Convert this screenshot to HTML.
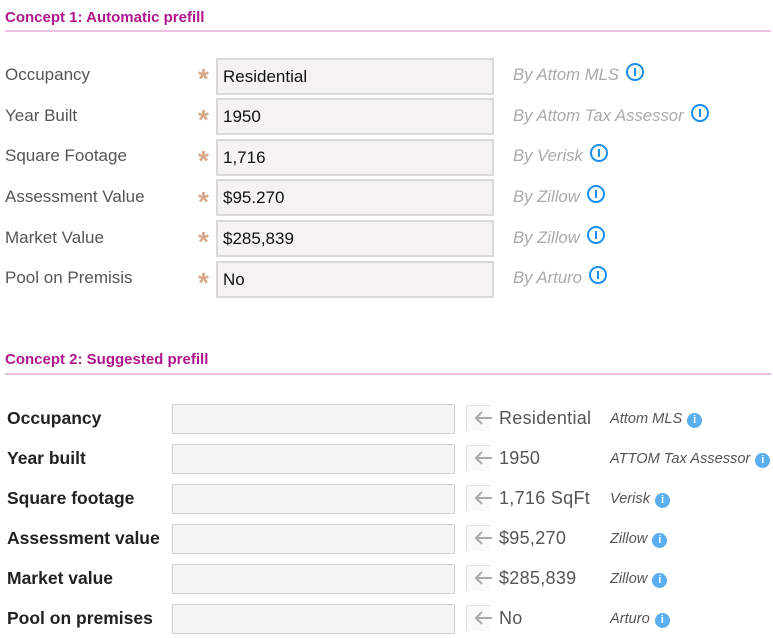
<!DOCTYPE html>
<html><head><meta charset="utf-8"><style>
*{margin:0;padding:0;box-sizing:border-box}
body{width:773px;height:638px;background:#fff;position:relative;overflow:hidden;font-family:"Liberation Sans",sans-serif}
div{white-space:nowrap}
.t{position:absolute;left:5px;font-size:15px;font-weight:bold;color:#b0168c}
.hr{position:absolute;left:5px;width:766px;height:2px;background:#ecbfe3}
.l1{position:absolute;left:5px;font-size:17px;color:#555}
.ast{position:absolute;left:198px;font-size:28px;font-weight:bold;color:#d7a888}
.in1{position:absolute;left:216px;width:278px;height:37px;background:#f4f3f2;border:2px solid #d9d9d9;font-size:17px;color:#111;padding:7px 0 0 5px}
.s1{position:absolute;left:513px;font-size:16.7px;font-style:italic;color:#aaa;margin-top:-2px}
.i1{display:inline-block;width:18px;height:18px;border:2px solid #1a8ef0;border-radius:50%;vertical-align:-1px;margin-left:7px;position:relative}
.i1:after{content:"";position:absolute;left:6px;top:3px;width:2px;height:8px;background:#1a8ef0}
.l2{position:absolute;left:7px;font-size:17.5px;color:#222;font-weight:bold}
.in2{position:absolute;left:172px;width:283px;height:30px;background:#f5f5f5;border:1px solid #ccc;border-radius:2px}
.ab{position:absolute;left:466px;width:24px;height:26px;border:1px solid #e2e2e2;border-right:none;border-bottom:none;background:#fafafa}
.ar{position:absolute;left:474px}
.v{position:absolute;left:499px;font-size:18px;color:#555;letter-spacing:0.3px}
.s2{position:absolute;left:610px;font-size:14.6px;font-style:italic;color:#555;margin-top:1px}
.i2{display:inline-block;width:15px;height:15px;border-radius:50%;background:#5aaef2;color:#fff;font-size:11px;font-style:normal;font-weight:bold;text-align:center;line-height:15px;vertical-align:0px;margin-left:5px}
</style></head><body>
<div class="t" style="top:9px">Concept 1: Automatic prefill</div>
<div class="hr" style="top:30px"></div>

<div class="l1" style="top:65px">Occupancy</div><div class="ast" style="top:63px">*</div><div class="in1" style="top:58px">Residential</div><div class="s1" style="top:65px">By Attom MLS<span class="i1"></span></div>
<div class="l1" style="top:106px">Year Built</div><div class="ast" style="top:104px">*</div><div class="in1" style="top:98px">1950</div><div class="s1" style="top:106px">By Attom Tax Assessor<span class="i1"></span></div>
<div class="l1" style="top:146px">Square Footage</div><div class="ast" style="top:145px">*</div><div class="in1" style="top:139px">1,716</div><div class="s1" style="top:146px">By Verisk<span class="i1"></span></div>
<div class="l1" style="top:187px">Assessment Value</div><div class="ast" style="top:186px">*</div><div class="in1" style="top:179px">$95.270</div><div class="s1" style="top:187px">By Zillow<span class="i1"></span></div>
<div class="l1" style="top:228px">Market Value</div><div class="ast" style="top:226px">*</div><div class="in1" style="top:220px">$285,839</div><div class="s1" style="top:228px">By Zillow<span class="i1"></span></div>
<div class="l1" style="top:268px">Pool on Premisis</div><div class="ast" style="top:267px">*</div><div class="in1" style="top:261px">No</div><div class="s1" style="top:268px">By Arturo<span class="i1"></span></div>

<div class="t" style="top:351px">Concept 2: Suggested prefill</div>
<div class="hr" style="top:373px"></div>

<svg width="0" height="0" style="position:absolute"><defs><g id="a"><path d="M2 7H18M8 1L2 7L8 13" fill="none" stroke="#aaa" stroke-width="2"/></g></defs></svg>

<div class="l2" style="top:408px">Occupancy</div><div class="in2" style="top:404px"></div><div class="ab" style="top:405px"></div><svg class="ar" style="top:411px" width="20" height="14"><use href="#a"/></svg><div class="v" style="top:408px">Residential</div><div class="s2" style="top:410px">Attom MLS<span class="i2">i</span></div>
<div class="l2" style="top:448px">Year built</div><div class="in2" style="top:444px"></div><div class="ab" style="top:445px"></div><svg class="ar" style="top:451px" width="20" height="14"><use href="#a"/></svg><div class="v" style="top:448px">1950</div><div class="s2" style="top:450px">ATTOM Tax Assessor<span class="i2">i</span></div>
<div class="l2" style="top:488px">Square footage</div><div class="in2" style="top:484px"></div><div class="ab" style="top:485px"></div><svg class="ar" style="top:491px" width="20" height="14"><use href="#a"/></svg><div class="v" style="top:488px">1,716 SqFt</div><div class="s2" style="top:490px">Verisk<span class="i2">i</span></div>
<div class="l2" style="top:528px">Assessment value</div><div class="in2" style="top:524px"></div><div class="ab" style="top:525px"></div><svg class="ar" style="top:531px" width="20" height="14"><use href="#a"/></svg><div class="v" style="top:528px">$95,270</div><div class="s2" style="top:530px">Zillow<span class="i2">i</span></div>
<div class="l2" style="top:568px">Market value</div><div class="in2" style="top:564px"></div><div class="ab" style="top:565px"></div><svg class="ar" style="top:571px" width="20" height="14"><use href="#a"/></svg><div class="v" style="top:568px">$285,839</div><div class="s2" style="top:570px">Zillow<span class="i2">i</span></div>
<div class="l2" style="top:608px">Pool on premises</div><div class="in2" style="top:604px"></div><div class="ab" style="top:605px"></div><svg class="ar" style="top:611px" width="20" height="14"><use href="#a"/></svg><div class="v" style="top:608px">No</div><div class="s2" style="top:610px">Arturo<span class="i2">i</span></div>
</body></html>
